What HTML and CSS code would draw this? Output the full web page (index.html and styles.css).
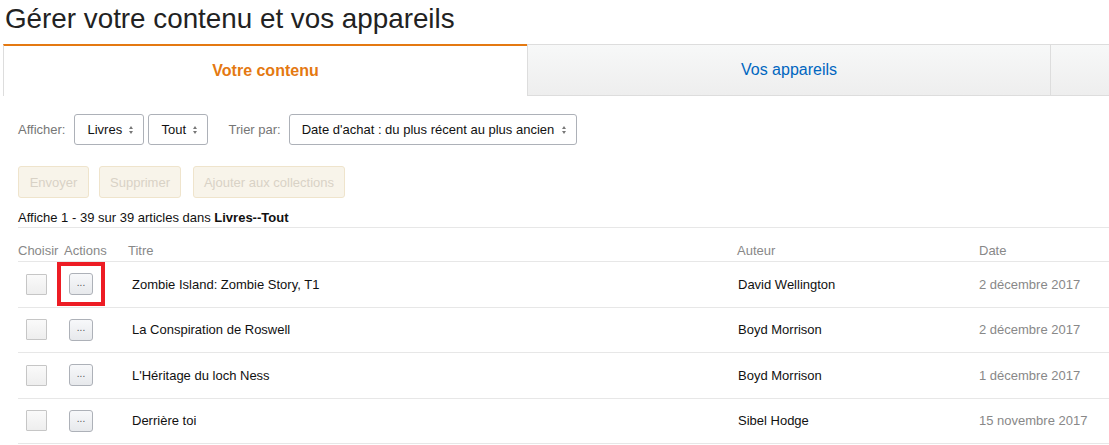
FILE: index.html
```html
<!DOCTYPE html>
<html lang="fr">
<head>
<meta charset="utf-8">
<title>Gérer votre contenu et vos appareils</title>
<link rel="stylesheet" href="styles.css">
</head>
<body>
<h1 class="page-title">Gérer votre contenu et vos appareils</h1>
<div class="tabs">
  <div class="tab tab-active">Votre contenu</div>
  <div class="tab tab-inactive">Vos appareils</div>
  <div class="tab tab-extra"></div>
</div>
<div class="content">
  <div class="filters">
    <span class="label">Afficher:</span>
    <span class="select sel-livres">Livres<span class="arrows"></span></span>
    <span class="select sel-tout">Tout<span class="arrows"></span></span>
    <span class="label label-sort">Trier par:</span>
    <span class="select sel-sort">Date d'achat : du plus récent au plus ancien<span class="arrows"></span></span>
  </div>
  <div class="actions-bar">
    <span class="btn-disabled btn-send">Envoyer</span>
    <span class="btn-disabled btn-del">Supprimer</span>
    <span class="btn-disabled btn-add">Ajouter aux collections</span>
  </div>
  <div class="summary">Affiche 1 - 39 sur 39 articles dans <b>Livres--Tout</b></div>
  <div class="table">
    <div class="row head">
      <div class="c-choose">Choisir</div>
      <div class="c-act">Actions</div>
      <div class="c-title">Titre</div>
      <div class="c-author">Auteur</div>
      <div class="c-date">Date</div>
    </div>
    <div class="row item">
      <div class="c-choose"><span class="checkbox"></span></div>
      <div class="c-act"><span class="dots">...</span><span class="highlight"></span></div>
      <div class="c-title">Zombie Island: Zombie Story, T1</div>
      <div class="c-author">David Wellington</div>
      <div class="c-date">2 décembre 2017</div>
    </div>
    <div class="row item">
      <div class="c-choose"><span class="checkbox"></span></div>
      <div class="c-act"><span class="dots">...</span></div>
      <div class="c-title">La Conspiration de Roswell</div>
      <div class="c-author">Boyd Morrison</div>
      <div class="c-date">2 décembre 2017</div>
    </div>
    <div class="row item">
      <div class="c-choose"><span class="checkbox"></span></div>
      <div class="c-act"><span class="dots">...</span></div>
      <div class="c-title">L'Héritage du loch Ness</div>
      <div class="c-author">Boyd Morrison</div>
      <div class="c-date">1 décembre 2017</div>
    </div>
    <div class="row item">
      <div class="c-choose"><span class="checkbox"></span></div>
      <div class="c-act"><span class="dots">...</span></div>
      <div class="c-title">Derrière toi</div>
      <div class="c-author">Sibel Hodge</div>
      <div class="c-date">15 novembre 2017</div>
    </div>
  </div>
</div>
</body>
</html>
```
FILE: styles.css
```css
* { box-sizing: border-box; }
html, body { margin: 0; padding: 0; background: #fff; overflow: hidden; }
body {
  font-family: Arial, "Liberation Sans", sans-serif;
  color: #111;
  font-size: 13px;
  width: 1109px;
}
.page-title {
  margin: 0;
  padding: 2px 0 0 5px;
  height: 44px;
  font-size: 27.8px;
  font-weight: normal;
  line-height: 34px;
  color: #222;
}
.tabs {
  display: flex;
  margin-left: 3px;
  height: 52px;
  overflow: hidden;
}
.tab {
  flex: none;
  display: flex;
  align-items: center;
  justify-content: center;
  font-size: 16px;
}
.tab-active {
  width: 524px;
  border-top: 2px solid #e47911;
  border-left: 1px solid #ddd;
  color: #e47911;
  font-weight: bold;
  background: #fff;
  padding-bottom: 1px;
}
.tab-inactive {
  width: 523px;
  border: 1px solid #ddd;
  border-right: none;
  background: linear-gradient(#f7f8f8, #eeeeee);
  color: #0066c0;
}
.tab-extra {
  width: 80px;
  border: 1px solid #ddd;
  background: linear-gradient(#f7f8f8, #eeeeee);
}
.content {
  padding-left: 18px;
}
.filters {
  display: flex;
  align-items: center;
  margin-top: 18px;
  height: 31px;
}
.label {
  color: #767676;
  font-size: 13px;
  margin-right: 9px;
}
.label-sort { margin-left: 16px; margin-right: 8px; }
.select {
  display: flex;
  align-items: center;
  height: 31px;
  border: 1px solid #adb1b8;
  border-radius: 3px;
  background: #fff;
  font-size: 13px;
  color: #111;
  padding: 0 9px 0 12px;
  margin-right: 4px;
}
.sel-livres { width: 70px; }
.sel-tout { width: 60px; }
.sel-sort { width: 288px; }
.arrows {
  display: inline-block;
  margin-left: auto;
  width: 5px;
  height: 8px;
  position: relative;
}
.arrows::before, .arrows::after {
  content: "";
  position: absolute;
  left: 0;
  border-left: 2.5px solid transparent;
  border-right: 2.5px solid transparent;
}
.arrows::before { top: 0; border-bottom: 3px solid #777; }
.arrows::after { bottom: 0; border-top: 3px solid #777; }
.actions-bar {
  display: flex;
  gap: 10px;
  margin-top: 21px;
  height: 32px;
}
.btn-disabled {
  display: flex;
  align-items: center;
  justify-content: center;
  border: 1px solid #efe4cc;
  border-radius: 3px;
  background: #f8f4ea;
  color: #d8d2c6;
  font-size: 13px;
}
.btn-send { width: 71px; }
.btn-del { width: 82px; }
.btn-add { width: 152px; margin-left: 2px; }
.summary {
  margin-top: 12px;
  height: 18px;
  line-height: 16px;
  font-size: 13px;
  color: #111;
  border-bottom: 1px solid #e7e7e7;
}
.summary b { font-weight: bold; }
.table { margin-top: 13px; }
.row {
  display: grid;
  grid-template-columns: 46px 64px 609px 242px 1fr;
  align-items: center;
  height: 45.5px;
  border-bottom: 1px solid #e7e7e7;
  color: #111;
  position: relative;
}
.row.head {
  height: 21px;
  align-items: start;
  color: #888;
  line-height: 19px;
}
.item .c-choose { padding-left: 8px; }
.item .c-act { padding-left: 5px; position: relative; }
.item .c-title { padding-left: 4px; }
.item .c-author { padding-left: 1px; }
.c-date { color: #888; }
.checkbox {
  display: block;
  width: 21px;
  height: 21px;
  border: 1px solid #c6c6c6;
  border-radius: 1px;
  background: linear-gradient(#fafafa, #eeeeee);
}
.dots {
  display: flex;
  align-items: center;
  justify-content: center;
  width: 24px;
  height: 22px;
  border: 1px solid #adb1b8;
  border-radius: 3px;
  background: linear-gradient(#f7f8fa, #e7e9ec);
  font-size: 10px;
  color: #555;
  line-height: 1;
  padding-bottom: 3px;
}
.highlight {
  position: absolute;
  left: -7px;
  top: -11px;
  width: 48px;
  height: 44px;
  border: 4px solid #ed1c24;
  pointer-events: none;
}
```
